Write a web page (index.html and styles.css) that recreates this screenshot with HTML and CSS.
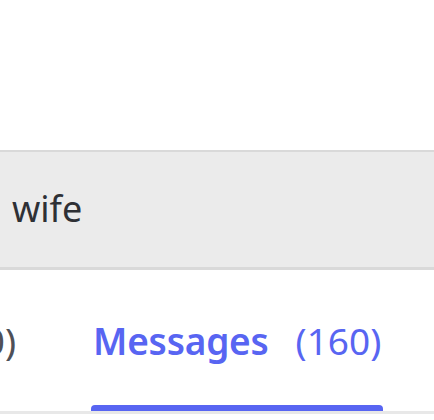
FILE: index.html
```html
<!DOCTYPE html>
<html lang="en">
<head>
<meta charset="utf-8">
<title>Search</title>
<link rel="stylesheet" href="styles.css">
</head>
<body>
<div class="top-space"></div>
<div class="search">
  <span class="query">wife</span>
</div>
<nav class="tabs">
  <div class="tab-prev-wrap">
    <div class="tab">
      <span class="tab-label">Members</span><span class="tab-count">(20)</span>
    </div>
  </div>
  <div class="tab active">
    <span class="tab-label">Messages</span><span class="tab-count">(160)</span>
  </div>
</nav>
</body>
</html>
```

FILE: styles.css
```css
html, body {
  margin: 0;
  padding: 0;
  background: #ffffff;
  overflow: hidden;
}

body {
  width: 434px;
  height: 420px;
  font-family: "Noto Sans", "Open Sans", sans-serif;
}

.top-space {
  height: 150px;
}

.search {
  border-top: 2px solid #d9d9d9;
  border-bottom: 3px solid #d9d9d9;
  background: #ebebeb;
  padding: 39px 12px 40px 12px;
  height: 36px;
}

.query {
  display: block;
  font-size: 36px;
  line-height: 36px;
  color: #2e3035;
}

.tabs {
  display: flex;
  align-items: flex-start;
  gap: 77px;
  border-bottom: 3px solid #e8e8e8;
}

.tab-prev-wrap {
  width: 16px;
  flex-shrink: 0;
  display: flex;
  justify-content: flex-end;
}

.tab {
  flex-shrink: 0;
  padding: 52px 0 46px;
  border-bottom: 6px solid transparent;
  font-size: 37px;
  line-height: 37px;
  color: #4e5058;
  white-space: nowrap;
  display: flex;
}

.tab-label {
  font-weight: 600;
  letter-spacing: -0.2px;
}

.tab-count {
  margin-left: 27px;
  font-weight: 400;
}

.tab.active {
  color: #5865f2;
  border-bottom: none;
  position: relative;
  padding-bottom: 52px;
}

.tab.active::after {
  content: "";
  position: absolute;
  left: -2px;
  right: -2px;
  bottom: 0;
  height: 6px;
  background: #5865f2;
  border-radius: 4px 4px 0 0;
}
```
